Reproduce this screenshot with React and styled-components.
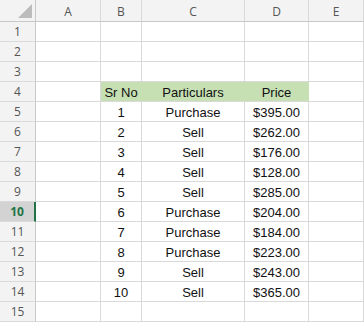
import React from 'react';
import styled, { createGlobalStyle } from 'styled-components';

const GlobalStyle = createGlobalStyle`
  html, body {
    margin: 0;
    padding: 0;
    background: #ffffff;
  }
  * {
    box-sizing: border-box;
  }
`;

const Sheet = styled.div`
  display: grid;
  grid-template-columns: 36px 65px 41px 103px 64px 1fr;
  grid-template-rows: 22px repeat(15, 20px);
  width: 364px;
  height: 323px;
  overflow: hidden;
  background: #ffffff;
  font-family: "Liberation Sans", Arial, sans-serif;
`;

const Corner = styled.div`
  position: relative;
  background: #f3f3f3;
  border-right: 1px solid #c8c8c8;
  border-bottom: 1px solid #c8c8c8;
`;

const Triangle = styled.div`
  position: absolute;
  right: 3px;
  bottom: 3px;
  width: 0;
  height: 0;
  border-left: 14px solid transparent;
  border-bottom: 14px solid #bcbcbc;
`;

const ColHead = styled.div`
  display: flex;
  align-items: center;
  justify-content: center;
  background: #f3f3f3;
  border-right: 1px solid #dadada;
  border-bottom: 1px solid #c8c8c8;
  color: #555555;
  font-family: "Open Sans", "Noto Sans", sans-serif;
  font-size: 12px;
  padding-top: 1px;
`;

const RowHead = styled.div`
  display: flex;
  align-items: center;
  justify-content: center;
  background: ${p => (p.$active ? '#d3d3d3' : '#f3f3f3')};
  border-right: ${p => (p.$active ? '2px solid #217346' : '1px solid #c8c8c8')};
  border-bottom: 1px solid #dadada;
  color: ${p => (p.$active ? '#217346' : '#555555')};
  font-weight: ${p => (p.$active ? 700 : 400)};
  font-family: "Open Sans", "Noto Sans", sans-serif;
  font-size: 12px;
`;

const Cell = styled.div`
  display: flex;
  align-items: center;
  justify-content: center;
  background: ${p => (p.$head ? '#c6e0b4' : '#ffffff')};
  border-right: 1px solid ${p => (p.$head ? '#c6e0b4' : '#d9d9d9')};
  border-bottom: 1px solid #d9d9d9;
  color: #111111;
  font-size: 13px;
  padding-top: 1px;
  white-space: nowrap;
`;

const columns = ['A', 'B', 'C', 'D', 'E'];

const data = [
  [1, 'Purchase', '$395.00'],
  [2, 'Sell', '$262.00'],
  [3, 'Sell', '$176.00'],
  [4, 'Sell', '$128.00'],
  [5, 'Sell', '$285.00'],
  [6, 'Purchase', '$204.00'],
  [7, 'Purchase', '$184.00'],
  [8, 'Purchase', '$223.00'],
  [9, 'Sell', '$243.00'],
  [10, 'Sell', '$365.00'],
];

function rowCells(r) {
  if (r === 4) return ['', 'Sr No', 'Particulars', 'Price', ''];
  const item = data[r - 5];
  if (item) return ['', String(item[0]), item[1], item[2], ''];
  return ['', '', '', '', ''];
}

export default function App() {
  const rows = Array.from({ length: 15 }, (_, i) => i + 1);
  return (
    <>
      <GlobalStyle />
      <Sheet>
        <Corner>
          <Triangle />
        </Corner>
        {columns.map(c => (
          <ColHead key={c}>{c}</ColHead>
        ))}
        {rows.map(r => (
          <React.Fragment key={r}>
            <RowHead $active={r === 10}>{r}</RowHead>
            {rowCells(r).map((v, i) => (
              <Cell key={i} $head={r === 4 && i >= 1 && i <= 3}>
                {v}
              </Cell>
            ))}
          </React.Fragment>
        ))}
      </Sheet>
    </>
  );
}
